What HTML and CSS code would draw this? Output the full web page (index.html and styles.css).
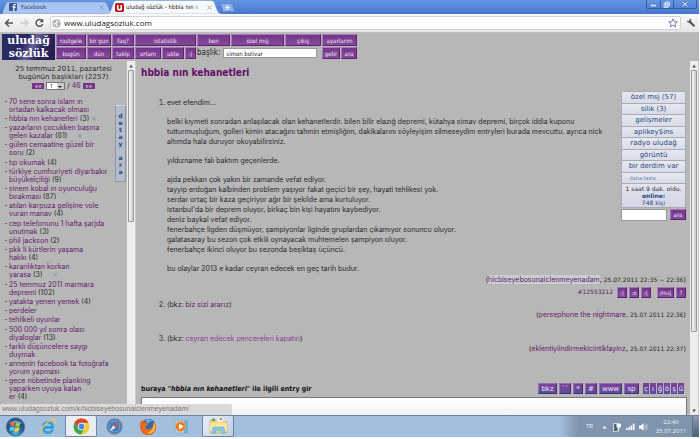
FILE: index.html
```html
<!DOCTYPE html>
<html lang="tr">
<head>
<meta charset="utf-8">
<title>uludağ sözlük - hbbia nın kehanetleri</title>
<link rel="stylesheet" href="styles.css">
</head>
<body>
<div class="window">
  <header class="tabs">
    <div class="tab tab-idle">
      <svg width="110" height="13" viewBox="0 0 110 13" class="tab-shape"><path d="M0 13L4 2Q5 1 7 1H102Q104 1 105 3L109 13Z" fill="#a9c5f1" stroke="#6d8fc8" stroke-width=".6"/></svg>
      <svg width="8" height="8" viewBox="0 0 8 8"><rect width="8" height="8" rx="1" fill="#3b5998"/><path d="M7 1.5H6Q4.800 1.500 4.800 3V8M3.500 4.200H6.800" stroke="#fff" stroke-width="1.200" fill="none"/></svg>
      <span class="tab-title">Facebook</span>
      <button class="tab-close" aria-label="Sekmeyi kapat"><svg width="5" height="5" viewBox="0 0 5 5"><path d="M.5 .5L4.500 4.500M4.500 .5L.5 4.500" stroke="#7f95b8" stroke-width=".9"/></svg></button>
    </div>
    <div class="tab tab-active">
      <svg width="113" height="14" viewBox="0 0 113 14" class="tab-shape"><path d="M0 14Q2 13 3 10L6 2Q7 .5 9 .5H103Q105 .5 106 2L109 10Q110 13 113 14Z" fill="#f8f9fb" stroke="#7d9cd0" stroke-width=".5"/></svg>
      <svg width="9" height="9" viewBox="0 0 9 9"><rect width="9" height="9" rx="1.500" fill="#b81c1c"/><path d="M2.700 2V5Q2.700 6.800 4.400 6.800Q6.200 6.800 6.200 5V2V7" stroke="#fff" stroke-width="1.500" fill="none"/></svg>
      <span class="tab-title">uludağ sözlük - hbbia nın <i class="fade">k</i></span>
      <button class="tab-close" aria-label="Sekmeyi kapat"><svg width="5" height="5" viewBox="0 0 5 5"><path d="M.5 .5L4.500 4.500M4.500 .5L.5 4.500" stroke="#999" stroke-width=".9"/></svg></button>
    </div>
    <button class="new-tab" aria-label="Yeni sekme"><svg width="15" height="9" viewBox="0 0 15 9"><path d="M.5 .5H10.500Q12 .5 12.500 2L14.500 8.500H4Q3 8.500 2.500 7Z" fill="#8fb1e8" stroke="#557fc6" stroke-width=".6"/><path d="M7.500 2.200V6.800M5.200 4.500H9.800" stroke="#e8f0fd" stroke-width="1.300"/></svg></button>
    <div class="win-controls">
      <svg width="51" height="10" viewBox="0 0 51 10"><path d="M.5 0V7Q.5 8.500 2 8.500H49Q50.500 8.500 50.500 7V0M14.500 0V8.500M27.500 0V8.500" fill="none" stroke="#2f5596" stroke-width=".8"/><path d="M4.500 5.500H10" stroke="#d5e3fa" stroke-width="1.600"/><path d="M19.500 2H23.500V6H19.500ZM18 3.500H22V7.500H18Z" fill="#8aa9de" stroke="#dce8fc" stroke-width=".8"/><path d="M36.500 2L41.500 6.500M41.500 2L36.500 6.500" stroke="#1f4380" stroke-width="2.200"/><path d="M36.500 2L41.500 6.500M41.500 2L36.500 6.500" stroke="#d5e3fa" stroke-width="1.200"/></svg>
    </div>
  </header>

  <nav class="toolbar">
    <svg width="44" height="12" viewBox="0 0 44 12"><path d="M9 6H2M5 2.500L1.500 6L5 9.500" fill="none" stroke="#555" stroke-width="1.500"/><path d="M16.500 6H23.500M20.500 2.500L24 6L20.500 9.500" fill="none" stroke="#ccc" stroke-width="1.500"/><path d="M38 3.600A3.400 3.400 0 1 0 38.700 7" fill="none" stroke="#555" stroke-width="1.400"/><path d="M39.300 1.500V5.200H35.500Z" fill="#555"/></svg>
    <div class="omnibox">
      <svg width="9" height="9" viewBox="0 0 9 9"><circle cx="4.500" cy="4.500" r="3.800" fill="#eee" stroke="#8c8c8c" stroke-width=".8"/><path d="M2 2Q4 1 4.500 2.500Q3 4 1.500 4ZM5 3.500L7.500 3Q8 6 5.500 7ZM2 5L4 5.500L3.500 7.500Z" fill="#a8a8a8"/></svg>
      <input class="url" aria-label="Adres" value="www.uludagsozluk.com">
      <svg width="10" height="10" viewBox="0 0 10 10"><path d="M5 .8L6.200 3.700L9.300 3.900L6.900 5.900L7.700 9L5 7.300L2.300 9L3.100 5.900L.7 3.900L3.800 3.700Z" fill="#fff" stroke="#65759a" stroke-width=".9"/></svg>
    </div>
    <svg width="10" height="10" viewBox="0 0 10 10"><path d="M3.500 3.500L8.500 8.300" stroke="#555" stroke-width="2.200"/><path d="M1 3.200Q2.500 5.300 4.600 4.200Q5.700 2.500 4 .8L3.800 2.700L2.600 3.300Z" fill="#555" stroke="#555" stroke-width=".6"/></svg>
  </nav>

  <header class="site-head">
    <a class="logo" href="#"><span>uludağ</span><span>sözlük</span></a>
    <div class="menu">
      <button class="pb">rastgele</button><button class="pb">bir gun</button><button class="pb">faq?</button><button class="pb wide">istatistik</button><button class="pb">ben</button><button class="pb">özel msj</button><button class="pb">çıkış</button><button class="pb">ayarlarım</button>
      <button class="pb">bugün</button><button class="pb">dün</button><button class="pb">takip</button><button class="pb">ortam</button><button class="pb">ukte</button><button class="pb">:)</button>
      <div class="find"><label for="baslik">başlık:</label><input id="baslik" value="simon bolivar"></div>
      <div class="pair"><button class="pb">getir</button><button class="pb">ara</button></div>
    </div>
  </header>

  <div class="frames">
    <aside class="side">
      <div class="side-head">25 temmuz 2011, pazartesi<br>bugünün başlıkları (2257)</div>
      <div class="pager"><button class="mini">««</button><span class="pick"><select aria-label="Sayfa"><option>1</option></select></span><span>/ <a href="#">46</a></span><button class="mini">»»</button></div>
      <div class="side-body">
        <ul class="topics">
          <li><a href="#">70 sene sonra islam ın<br>ortadan kalkacak olması</a></li>
          <li><a href="#">hbbia nın kehanetleri</a> (3) <b class="x">×</b></li>
          <li><a href="#">yazarların çocukken başına<br>gelen kazalar</a> (81) <b class="x far">×</b></li>
          <li><a href="#">gülen cemaatine güzel bir<br>soru</a> (2)</li>
          <li><a href="#">tıp okumak</a> (4)</li>
          <li><a href="#">türkiye cumhuriyeti diyarbakır<br>büyükelçiliği</a> (9)</li>
          <li><a href="#">sinem kobal ın oyunculuğu<br>bırakması</a> (87)</li>
          <li><a href="#">atılan karpuza gelişine vole<br>vuran manav</a> (4)</li>
          <li><a href="#">cep telefonunu 1 hafta şarjda<br>unutmak</a> (3)</li>
          <li><a href="#">phil jackson</a> (2)</li>
          <li><a href="#">pkk li kürtlerin yaşama<br>hakkı</a> (4)</li>
          <li><a href="#">karanlıktan korkan<br>yarasa</a> (3) <b class="x far">×</b></li>
          <li><a href="#">25 temmuz 2011 marmara<br>depremi</a> (102)</li>
          <li><a href="#">yatakta yenen yemek</a> (4)</li>
          <li><a href="#">perdeler</a></li>
          <li><a href="#">tehlikeli oyunlar</a></li>
          <li><a href="#">500 000 yıl sonra olası<br>diyaloglar</a> (13)</li>
          <li><a href="#">farklı düşüncelere saygı<br>duymak</a></li>
          <li><a href="#">annenin facebook ta fotoğrafa<br>yorum yapması</a></li>
          <li><a href="#">gece nöbetinde planking<br>yaparken uyuya kalan<br>er</a> (4)</li>
        </ul>
        <button class="detail">d<br>e<br>t<br>a<br>y<br><br>a<br>r<br>a</button>
      </div>
    </aside>
    <div class="scroll scroll-side"><i class="arrow">▲</i><div class="thumb"></div></div>

    <main class="main">
      <h1>hbbia nın kehanetleri</h1>
      <aside class="panel">
        <a href="#">özel msj (57)</a><a href="#">silik (3)</a><a href="#">gelişmeler</a><a href="#">aplikey$ins</a><a href="#">radyo uludağ</a><a href="#">görüntü</a><a href="#">bir derdim var</a>
        <a href="#" class="more">◦ daha fazla</a>
        <div class="info">1 saat 9 dak. oldu.<br><b>online:</b><br><span>748 kişi</span></div>
        <div class="panel-find"><input aria-label="Ara"><button class="pb">ara</button></div>
      </aside>
      <ol class="entries">
        <li>
          <p>evet efendim...</p>
          <p>belki kıymeti sonradan anlaşılacak olan kehanetlerdir. bilen bilir elazığ depremi, kütahya simav depremi, birçok iddia kuponu<br>tutturmuşluğum, golleri kimin atacağını tahmin etmişliğim, dakikalarını söyleyişim silmeseydim entryleri burada mevcuttu. ayrıca nick<br>altımda hala duruyor okuyabilirsiniz.</p>
          <p>yıldızname falı baktım geçenlerde.</p>
          <p>ajda pekkan çok yakın bir zamande vefat ediyor.<br>tayyip erdoğan kalbinden problem yaşıyor fakat geçici bir şey, hayati tehlikesi yok.<br>serdar ortaç bir kaza geçiriyor ağır bir şekilde ama kurtuluyor.<br>istanbul'da bir deprem oluyor, birkaç bin kişi hayatını kaybediyor.<br>deniz baykal vefat ediyor.<br>fenerbahçe ligden düşmüyor, şampiyonlar liginde gruplardan çıkamıyor sonuncu oluyor.<br>galatasaray bu sezon çok etkili oynayacak muhtemelen şampiyon oluyor.<br>fenerbahçe ikinci oluyor bu sezonda beşiktaş üçüncü.</p>
          <p>bu olaylar 2013 e kadar ceyran edecek en geç tarih budur.</p>
          <div class="by">(<a href="#" class="hover">hicbiseyebosunaiclenmeyenadam</a>, <small>25.07.2011 22:35 ~ 22:36</small>)</div>
          <div class="acts"><a href="#">#12553212</a><button class="pb">:)</button><button class="pb">:o</button><button class="pb">:(</button><button class="pb msj">/msj</button><button class="pb">?</button></div>
        </li>
        <li>
          <p>(bkz: <a href="#">biz sizi ararız</a>)</p>
          <div class="by">(<a href="#">persephone the nightmare</a>, <small>25.07.2011 22:36</small>)</div>
        </li>
        <li>
          <p>(bkz: <a href="#" class="fresh">ceyran edecek pencereleri kapatın</a>)</p>
          <div class="by">(<a href="#">eklentiyiindirmekicintiklayinz</a>, <small>25.07.2011 22:37</small>)</div>
        </li>
      </ol>
      <div class="compose">
        <label for="entry">buraya <i>"hbbia nın kehanetleri"</i> ile ilgili entry gir</label>
        <div class="format"><button class="fb w20">bkz</button><button class="fb">``</button><button class="fb w10">*</button><button class="fb">#</button><button class="fb w23">www</button><button class="fb w15">sp</button><span class="chars"><button class="fb">ç</button><button class="fb">ı</button><button class="fb">ğ</button><button class="fb">ö</button><button class="fb">ş</button><button class="fb">ü</button></span></div>
      </div>
      <textarea id="entry"></textarea>
    </main>
    <div class="scroll scroll-main"><i class="arrow">▲</i><div class="thumb"></div><i class="arrow end">▼</i></div>
    <div class="status">www.uludagsozluk.com/k/hicbiseyebosunaiclenmeyenadam/</div>
  </div>

  <footer class="taskbar">
    <button class="task start" aria-label="Başlat"><svg width="21" height="20" viewBox="0 0 21 20"><defs><radialGradient id="orb" cy=".8"><stop offset="0" stop-color="#58c8e8"/><stop offset=".5" stop-color="#2f78a8"/><stop offset="1" stop-color="#28527f"/></radialGradient></defs><circle cx="10.500" cy="10" r="9.300" fill="url(#orb)" stroke="#54779e" stroke-width=".6"/><path d="M3 7Q10 0 18 7Q10 4 3 7" fill="#a9c8df" opacity=".7"/><path d="M6 5.500Q8 4.500 10 5.500L9.400 9.300Q7.500 8.500 5.300 9.300Z" fill="#ee6a35"/><path d="M10.800 5.700Q13 6.600 15.300 5.600L14.500 9.300Q12.500 10.300 10.200 9.500Z" fill="#9bd04c"/><path d="M5.100 10.200Q7.300 9.300 9.300 10.200L8.600 14Q6.600 13 4.500 14Z" fill="#62c5f3"/><path d="M10.100 10.400Q12.300 11.200 14.300 10.300L13.600 14Q11.500 15 9.400 14.200Z" fill="#fbd044"/></svg></button>
    <button class="task ie" aria-label="Internet Explorer"><svg width="18" height="18" viewBox="0 0 18 18"><path d="M13.500 11.500Q12 15 8.800 14.800Q4.500 14.300 4.300 9.500Q4.600 4.600 9 4.300Q13.600 4.500 13.700 9.400H5" fill="none" stroke="#2d9fdd" stroke-width="2.600"/><path d="M2.500 16Q-.5 15 4 9Q10 1.500 15.500 1.200Q17.500 1.500 15 5.500" fill="none" stroke="#efc84a" stroke-width="1.300"/></svg></button>
    <button class="task open chrome" aria-label="Chrome"><svg width="17" height="17" viewBox="0 0 17 17"><circle cx="8.500" cy="8.500" r="8" fill="#f5cd36"/><path d="M1.600 4.500A8 8 0 0 1 15.500 4.700H8.500L4.800 9.600Z" fill="#dc4437"/><path d="M1.600 4.500A8 8 0 0 0 8 16.500L11.700 10.500H6Z" fill="#3fa552"/><circle cx="8.500" cy="8.500" r="3.700" fill="#fff"/><circle cx="8.500" cy="8.500" r="2.900" fill="#478be0"/></svg></button>
    <button class="task safari" aria-label="Safari"><svg width="17" height="17" viewBox="0 0 17 17"><circle cx="8.500" cy="8.500" r="7.500" fill="#3f7fc0" stroke="#788693" stroke-width="1.300"/><circle cx="8.500" cy="8.500" r="5.300" fill="none" stroke="#c6dcf0" stroke-width=".8" stroke-dasharray="1 1"/><path d="M13.500 3.500L9.600 9.700L7.300 7.300Z" fill="#d94b3d"/><path d="M3.500 13.500L7.300 7.300L9.600 9.700Z" fill="#eee"/></svg></button>
    <button class="task firefox" aria-label="Firefox"><svg width="18" height="18" viewBox="0 0 18 18"><circle cx="9" cy="9" r="8" fill="#d4521d"/><circle cx="10" cy="7" r="6" fill="#2d69ad"/><path d="M6 2Q10 0 13.500 3Q10 3 9 6Z" fill="#62b4df"/><path d="M1 6L2 2L4 4Q6 3.500 7.500 5L9.500 7L6 8.500Q7 12 11 11Q15 9 14.500 3Q18 7 16.500 12Q13 18 7 16.500Q.5 14 1 6" fill="#e36c20"/><path d="M15 4.500Q17.500 9 15 13Q12 16.500 8 15Q14 14 15 4.500" fill="#f8c440"/></svg></button>
    <button class="task wmp" aria-label="Media Player"><svg width="18" height="17" viewBox="0 0 18 17"><path d="M2 2H13V15H2Z" fill="#a7d0e8" stroke="#7fb0d0" stroke-width=".7"/><path d="M11 3L15 2V15H11Z" fill="#6baed4"/><circle cx="7.500" cy="8.500" r="5" fill="#ee7b20" stroke="#f5b16c" stroke-width=".7"/><path d="M6 5.600L10.600 8.500L6 11.400Z" fill="#fff"/></svg></button>
    <button class="task open files" aria-label="Dosyalar"><svg width="19" height="18" viewBox="0 0 19 18"><path d="M1 3H7L8 4.500H18V16H1Z" fill="#ecd580" stroke="#c3a957" stroke-width=".6"/><path d="M3 1.500H6V4H3Z" fill="#59ad60"/><path d="M8 2H14V5H8Z" fill="#f5f2dd"/><path d="M11 1.500H13V3H11Z" fill="#dc5a44"/><path d="M1 6H18V14H1Z" fill="#f7e79c"/><path d="M3.500 16.500V12Q3.500 10 5.500 10H13.500Q15.500 10 15.500 12V16.500H12.500V13.500H6.500V16.500Z" fill="#82c8e3" stroke="#5ca8ca" stroke-width=".5"/></svg></button>
    <div class="tray">
      <span>TR</span>
      <svg width="50" height="12" viewBox="0 0 50 12"><path d="M2 7.500L4.500 5L7 7.500Z" fill="#edf2f7"/><path d="M13.500 2.500H18V10.500H13.500Z" fill="#52657c" stroke="#e8eef5" stroke-width=".8"/><path d="M17 3H20.500V6H17ZM18.700 6V10" fill="#fff" stroke="#fff" stroke-width=".9"/><path d="M26 9V7.500H27.500V9ZM28.300 9V6.300H29.800V9ZM30.600 9V4.700H32.100V9ZM32.900 9V2.700H34.400V9Z" fill="#f2f5f8" stroke="#fff" stroke-width=".3"/><path d="M39 4.500H41L43.500 2V10L41 7.500H39Z" fill="#fff"/><path d="M44.500 4Q46 6 44.500 8M46 2.500Q48.500 6 46 9.500" fill="none" stroke="#e3eaf2" stroke-width=".7"/></svg>
      <time>22:40<br>25.07.2011</time>
      <button class="desk" aria-label="Masaüstünü göster"></button>
    </div>
  </footer>
</div>
</body>
</html>
```
FILE: styles.css
```css
* { box-sizing: border-box; }
body { margin: 0; background: #fff; font: 7px/10px Inter, "DejaVu Sans Condensed", sans-serif; color: #2a2a2e; }
button, input, select, textarea { font: inherit; margin: 0; padding: 0; border: 0; border-radius: 0; color: inherit; }
a { color: #66206c; text-decoration: none; }
svg { display: block; flex: none; }
.window { height: 100vh; padding: 0 1px 2px 0; display: flex; flex-direction: column; overflow: hidden; }

/* browser chrome */
.tabs { flex: none; height: 14px; display: flex; padding-left: 2px; background: linear-gradient(#6596e2, #4677cf); font: 6px/10px "DejaVu Sans Condensed", sans-serif; }
.tab { position: relative; display: flex; align-items: center; height: 14px; }
.tab > * { position: relative; }
.tab > .tab-shape { position: absolute; left: 0; bottom: 0; }
.tab-idle { width: 106px; padding: 0 4px 0 7px; gap: 4px; color: #35496b; }
.tab-active { width: 112px; padding: 0 8px 0 7px; gap: 2px; color: #222; }
.tab-title { flex: 1; white-space: nowrap; }
.fade { font-style: normal; color: #aaa; }
.tab-close { background: none; }
.new-tab { background: none; align-self: center; }
.win-controls { margin: 0 2px 0 auto; }
.toolbar { flex: none; height: 19px; display: flex; align-items: center; gap: 5px; padding: 0 3px 0 4px; background: linear-gradient(#fafafa, #e6e6e6); border-bottom: 1px solid #bdbdbd; }
.toolbar > svg:first-child { margin-right: -3px; }
.omnibox { flex: 1; height: 14px; display: flex; align-items: center; gap: 3px; padding: 0 2px 0 1px; background: #fff; border: 1px solid #d2d2d2; border-radius: 2px; }
.url { flex: 1; min-width: 0; background: none; font: 8px/12px "Open Sans", sans-serif; color: #222; }

/* purple buttons */
.pb { background: linear-gradient(#733588, #854a9d); border: 1px solid; border-color: #a877bd #5b2270 #5b2270 #a877bd; color: #f0e4f5; font: 6px/9px "DejaVu Sans Condensed", sans-serif; text-align: center; white-space: nowrap; }

/* site header */
.site-head { flex: none; display: flex; gap: 1px; height: 28px; padding: 1px 2px; background: #b7b7b7; }
.logo { width: 53px; height: 26px; display: flex; flex-direction: column; align-items: center; background: linear-gradient(120deg, #292b63, #282960 40%, #67609a 55%, #2d2560 70%, #201d50); color: #fff; font: bold 11px/13px "DejaVu Serif", serif; }
.menu { display: grid; grid-template-columns: 30px 24px 22px 26px 22px 11px 33px 53px 36px 35px; grid-auto-rows: 12px; gap: 1px; }
.wide { grid-column: span 3; }
.find { grid-column: span 3; display: flex; align-items: center; gap: 3px; padding-right: 4px; font: 8px/10px "DejaVu Sans Condensed", sans-serif; color: #222; }
.find input { flex: 1; min-width: 0; height: 10px; padding-left: 2px; background: #fff; border: 1px solid #999; font-size: 6px; line-height: 8px; }
.pair { display: grid; grid-template-columns: 18px 16px; gap: 1px; }

/* frames */
.frames { position: relative; flex: 1; min-height: 0; display: flex; background: #b7b7b7; }
.side { flex: none; width: 127px; padding-top: 4px; overflow: hidden; }
.side-head { font: 7px/8px "DejaVu Sans", sans-serif; text-align: center; }
.pager { display: flex; justify-content: center; align-items: center; gap: 2px; height: 9px; }
.pick { position: relative; display: flex; }
.pick::after { content: ""; position: absolute; right: 3px; bottom: 2px; border: 2px solid transparent; border-top-color: #222; border-bottom: 0; }
.pick select { appearance: none; width: 19px; height: 8px; padding-left: 3px; background: linear-gradient(90deg, #fff 60%, #ccc 60%); border: 1px solid #777; font-size: 5px; line-height: 6px; }
.mini { width: 12px; height: 6px; background: #733588; color: #ecd; font-size: 6px; line-height: 4px; }
.side-body { display: flex; margin-top: 8px; }
.topics { flex: 1; list-style: none; margin: 0; padding: 0 0 0 9px; line-height: 8px; white-space: nowrap; width: 0; }
.topics li { margin-bottom: 1px; }
.topics li:nth-child(4n) { margin-bottom: 2px; }
.topics li::before { content: "·"; float: left; margin-left: -4px; font-weight: bold; }
.x { color: #7d9db3; }
.far { margin-left: 8px; }
.detail { flex: none; width: 11px; height: 77px; margin: 7px 1px 0 0; background: #b4bcc9; border: 1px solid #8e98a8; border-top-color: #cdd4df; color: #174a8b; font: bold 6px/7px "DejaVu Sans", sans-serif; }
.scroll { flex: none; width: 9px; background: #ededed; display: flex; flex-direction: column; border-right: 1px solid #ccc; }
.arrow { height: 9px; font: normal 4px/9px "DejaVu Sans", sans-serif; text-align: center; color: #444; }
.end { margin-top: auto; }
.thumb { margin: 0 1px; background: linear-gradient(90deg, #f8f8f8, #c8c8c8); border: 1px solid #999; border-radius: 1px; }
.scroll-side .thumb { height: 43%; }
.scroll-main .thumb { height: 74%; }

/* entries */
.main { flex: 1; min-width: 0; padding: 6px 3px 0 5px; display: flow-root; overflow: hidden; }
h1 { margin: 0; font: bold 10px/12px "DejaVu Sans Condensed", sans-serif; color: #660a68; }
.panel { float: right; width: 65px; margin: 12px 1px 0 0; font-family: "DejaVu Sans", sans-serif; }
.panel > a { display: block; height: 12px; background: linear-gradient(#e6e8f0, #d9dbe8); border: solid #aaaab2; border-width: 1px 1px 0; font-size: 7px; line-height: 11px; text-align: center; color: #284a7e; }
.panel > a:nth-child(even) { height: 11px; line-height: 10px; }
.panel > .more { padding-left: 3px; text-align: left; font: 5px/9px "DejaVu Sans", sans-serif; color: #607b9f; }
.info { padding: 1px 0; background: linear-gradient(#e3e4ee, #d4d6e6); border: 1px solid #aaaab2; font-size: 6px; line-height: 7px; text-align: center; white-space: nowrap; }
.info b, .info span { color: #284a7e; }
.panel-find { display: flex; gap: 3px; margin-top: 1px; }
.panel-find input { flex: 1; min-width: 0; background: #fff; border: 1px solid #999; }
.panel-find .pb { width: 16px; height: 11px; }
.entries { margin: 19px 0 0; padding: 0 1px 0 26px; }
.entries li { margin-bottom: 19px; }
.entries li:first-child { margin-bottom: 2px; }
.entries li:nth-child(2) { margin-bottom: 14px; }
.entries p { margin: 0 0 9px; white-space: nowrap; }
.entries li > p:last-of-type { margin: 0; }
.by { text-align: right; }
.by small { font: 6px/10px "DejaVu Sans", sans-serif; }
.entries li:first-child .by { margin-top: 1px; }
.hover { background: #c9cdd0; }
.fresh { color: #8b3f91; }
.acts { display: flex; justify-content: flex-end; gap: 2px; margin-top: 2px; font: 6px/10px "DejaVu Sans", sans-serif; }
.acts a { margin-right: 2px; }
.acts .pb { width: 10px; height: 11px; }
.acts .msj { width: 17px; margin-left: 4px; }
.compose { display: flex; align-items: center; justify-content: space-between; margin-top: 29px; padding-right: 3px; }
.compose label { font: bold 7px/10px "DejaVu Sans Condensed", sans-serif; color: #111; }
.format { display: flex; gap: 2px; }
.fb { width: 12px; height: 11px; background: linear-gradient(#7d3f98, #57509e); border: 1px solid; border-color: #9570b8 #4a2c74 #4a2c74 #9570b8; color: #f0e8fa; font: 7px/8px "DejaVu Sans", sans-serif; }
.w10 { width: 10px; }
.w15 { width: 15px; }
.w20 { width: 19px; }
.w23 { width: 23px; }
.chars { display: flex; gap: 1px; margin-left: 2px; }
.chars .fb { width: 6px; border-width: 0; }
textarea { display: block; width: 100%; height: 40px; margin-top: 3px; background: linear-gradient(#fff, #dfe5e2); border: 1px solid #777; resize: none; }
.status { position: absolute; left: 0; bottom: 0; width: 232px; height: 11px; padding-left: 2px; background: #dadada; border-radius: 0 2px 0 0; font: 7px/10px "Liberation Sans", sans-serif; color: #777; }

/* taskbar */
.taskbar { flex: none; height: 22px; display: flex; align-items: stretch; background: #a4bfde; border-top: 1px solid #71819a; }
.task { display: flex; align-items: center; justify-content: center; width: 34px; background: none; }
.start { width: 31px; }
.open { width: 32px; border: 1px solid #6f84a3; border-top: 0; border-radius: 2px; background: linear-gradient(135deg, #e8eef8, #bccee6); }
.chrome { background: #e9edf4; }
.files { margin-left: 3px; }
.tray { flex: 1; display: flex; align-items: center; justify-content: flex-end; color: #f2f6fa; font: 6px/9px "Open Sans", sans-serif; background: linear-gradient(90deg, transparent 70%, #8094ad 74%); }
.tray span { margin-right: 7px; }
.tray time { width: 42px; text-align: center; }
.desk { align-self: stretch; width: 7px; background: linear-gradient(#8b9db4, #4c6078); border-left: 1px solid #5d6f86; }
```
